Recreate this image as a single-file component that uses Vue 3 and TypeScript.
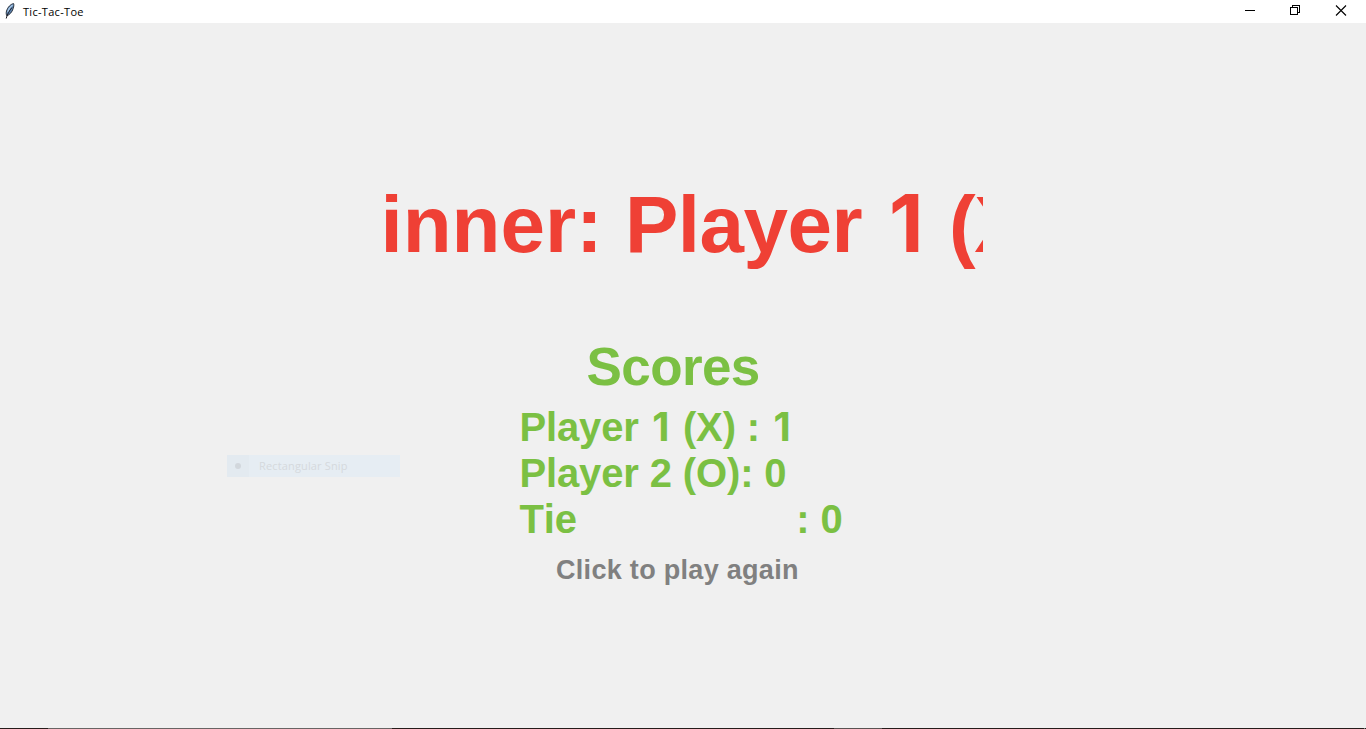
<script setup lang="ts">
interface Score {
  label: string
  digit: string
  rest: string
  value: string
}

const gap = '\u00a0'.repeat(20)
const scores: Score[] = [
  { label: 'Player ', digit: '1', rest: ' (X) : ', value: '1' },
  { label: 'Player ', digit: '2', rest: ' (O): ', value: '0' },
  { label: 'Tie', digit: '', rest: `${gap}: `, value: '0' },
]
</script>

<template>
  <div class="window">
    <header class="titlebar">
      <svg class="feather" width="12" height="18" viewBox="0 0 12 18">
        <path d="M9.6 1.6C6.8 2 3.8 5 2.5 9C2 11 2.2 12.6 2.8 13.8C5.5 13 8.2 10 9.2 6.5C9.8 4.5 10.1 2.8 9.6 1.6Z" fill="#5f86b3" stroke="#20262e" stroke-width=".9" />
        <path d="M8.6 3C6.5 4.5 4.5 7 3.7 10" fill="none" stroke="#a9c9e8" stroke-width="1.3" />
        <path d="M8 5.5C5.5 8.5 3.3 12 2.2 16.5" fill="none" stroke="#1c1c24" stroke-width="1" />
      </svg>
      <span class="title">Tic-Tac-Toe</span>
      <div class="controls">
        <svg width="46" height="23" viewBox="0 0 46 23" shape-rendering="crispEdges">
          <path d="M19 10.5H29" stroke="#000" />
        </svg>
        <svg width="46" height="23" viewBox="0 0 46 23" shape-rendering="crispEdges">
          <path d="M18.5 7.5H25.5V14.5H18.5ZM20.5 7V5.5H27.5V12.5H26" fill="none" stroke="#000" />
        </svg>
        <svg width="46" height="23" viewBox="0 0 46 23">
          <path d="M18 5.5L28 15.5M28 5.5L18 15.5" stroke="#000" stroke-width="1.1" />
        </svg>
      </div>
    </header>
    <main class="stage">
      <section class="board">
        <h1 class="winner">Winner: <span class="name">Player </span><span class="one">1</span><span class="mark"> (X)</span></h1>
        <h2 class="heading">Scores</h2>
        <div class="scores">
          <p v-for="(s, i) in scores" :key="i" class="score">{{ s.label }}<span :class="{ one: s.digit === '1' }">{{ s.digit }}</span>{{ s.rest }}<span :class="{ one: s.value === '1' }">{{ s.value }}</span></p>
        </div>
        <p class="again">Click to play again</p>
      </section>
    </main>
    <div class="snip">
      <span class="snip-icon"><i class="dot"></i></span>
      <span class="snip-label">Rectangular Snip</span>
    </div>
    <footer class="edge"></footer>
  </div>
</template>

<style>
body { margin: 0; overflow: hidden; }
</style>

<style scoped>
.window {
  position: relative;
  display: flex;
  flex-direction: column;
  width: 1366px;
  height: 729px;
  overflow: hidden;
  background: #f0f0f0;
  font-family: "Liberation Sans", Arial, sans-serif;
  font-kerning: none;
}
.titlebar {
  display: flex;
  flex: none;
  height: 23px;
  background: #fff;
}
.feather { margin: 2px 0 0 4px; }
.title {
  margin-left: 7px;
  font: 11px/23px "Open Sans", "Noto Sans", sans-serif;
  letter-spacing: 0.3px;
  color: #000;
}
.controls { display: flex; margin-left: auto; margin-right: 2px; }
.stage {
  display: flex;
  flex: 1;
  justify-content: center;
}
.board {
  width: 600px;
  overflow: hidden;
}
h1, h2, p { margin: 0; font-weight: bold; white-space: pre; }
.one {
  display: inline-block;
  width: 0.556em;
  line-height: 1;
  font-family: Inter, Roboto, sans-serif;
  letter-spacing: 0;
  text-align: center;
}
.winner {
  height: 92px;
  margin: 156px 0 0 -78px;
  font-size: 80px;
  line-height: 92px;
  color: #ef4035;
}
.name { letter-spacing: -0.5px; }
.mark { letter-spacing: -1.5px; }
.heading {
  margin: 66px 0 0 203.5px;
  font-size: 53px;
  line-height: 60px;
  letter-spacing: -0.6px;
  color: #7bc043;
}
.scores { margin: 7px 0 0 136.5px; color: #7bc043; }
.score {
  height: 46px;
  font-size: 40px;
  line-height: 46px;
  letter-spacing: -0.14px;
}
.again {
  margin: 12px 0 0 173px;
  font-size: 27px;
  line-height: 32px;
  letter-spacing: 0.3px;
  color: #808080;
}
.snip {
  position: absolute;
  left: 227px;
  top: 455px;
  display: flex;
  width: 173px;
  height: 22px;
  background: #e6edf3;
}
.snip-icon {
  display: flex;
  align-items: center;
  justify-content: center;
  width: 22px;
  background: #e3eaf0;
}
.dot { width: 6px; height: 6px; border-radius: 50%; background: #d2d7dc; }
.snip-label {
  margin-left: 10px;
  font: 11px/22px "Open Sans", "Noto Sans", sans-serif;
  letter-spacing: 0.15px;
  color: #d5d9dd;
}
.edge {
  flex: none;
  height: 1px;
  background: linear-gradient(90deg, #251c1a 48px, #686463 48px 392px, #251c1a 392px 834px, #595251 834px 882px, #251c1a 882px 1364px, #777 1364px 1365px, #251c1a 1365px);
}
</style>
